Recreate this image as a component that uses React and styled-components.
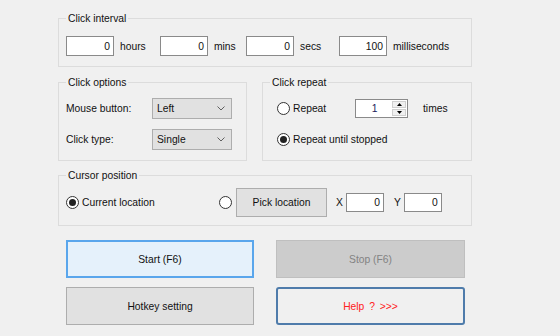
import React from 'react';
import styled, { createGlobalStyle, css } from 'styled-components';

const GlobalStyle = createGlobalStyle`
  html, body {
    margin: 0;
    padding: 0;
    background: #f0f0f0;
  }
  body {
    font-family: 'Liberation Sans', Arial, sans-serif;
    font-size: 10.3px;
    color: #111;
  }
`;

const Window = styled.div`
  width: 560px;
  height: 336px;
  background: #f0f0f0;
  padding: 12px 0 0 58px;
  box-sizing: border-box;
  overflow: hidden;
`;

const Group = styled.fieldset`
  margin: 0;
  padding: 0;
  border: 1px solid #dcdcdc;
  width: ${(p) => p.width}px;
  box-sizing: border-box;
  margin-top: ${(p) => p.top || 0}px;
`;

const Legend = styled.legend`
  margin-left: 7px;
  padding: 0 2px;
  line-height: 13px;
`;

const Body = styled.div`
  padding: ${(p) => p.pad};
  display: flex;
  flex-direction: column;
  gap: ${(p) => p.gap || 0}px;
`;

const Row = styled.div`
  display: flex;
  align-items: center;
  height: ${(p) => p.h || 21}px;
`;

const TextBox = styled.div`
  width: ${(p) => p.w || 48}px;
  height: ${(p) => p.h || 20}px;
  box-sizing: border-box;
  background: #fff;
  border: 1px solid #8a8a8a;
  display: flex;
  align-items: center;
  justify-content: flex-end;
  padding-right: 3px;
  flex: none;
`;

const Unit = styled.span`
  margin-left: ${(p) => p.gap || 6}px;
  width: ${(p) => (p.w ? `${p.w}px` : 'auto')};
  flex: none;
`;

const Pair = styled.div`
  display: grid;
  grid-template-columns: 86px 80px;
  align-items: center;
  height: 21px;
`;

const Combo = styled.div`
  height: 21px;
  box-sizing: border-box;
  background: #e1e1e1;
  border: 1px solid #adadad;
  display: flex;
  align-items: center;
  justify-content: space-between;
  padding: 0 6px 0 4px;
`;

const Chevron = () => (
  <svg width="8" height="5" viewBox="0 0 8 5">
    <path d="M0.5 0.5 L4 4 L7.5 0.5" fill="none" stroke="#606060" strokeWidth="1" />
  </svg>
);

const RadioWrap = styled.label`
  display: flex;
  align-items: center;
  gap: 3px;
  width: ${(p) => (p.w ? `${p.w}px` : 'auto')};
  flex: none;
`;

const Circle = styled.span`
  width: 13px;
  height: 13px;
  box-sizing: border-box;
  border-radius: 50%;
  border: 1px solid #333;
  background: #fff;
  display: flex;
  align-items: center;
  justify-content: center;
  flex: none;
  ${(p) =>
    p.checked &&
    css`
      &::after {
        content: '';
        width: 7px;
        height: 7px;
        border-radius: 50%;
        background: #222;
      }
    `};
`;

const Radio = ({ checked, children, w }) => (
  <RadioWrap w={w}>
    <Circle checked={checked} />
    {children}
  </RadioWrap>
);

const Spinner = styled.div`
  width: 53px;
  height: 19px;
  box-sizing: border-box;
  background: #fff;
  border: 1px solid #8a8a8a;
  display: flex;
  flex: none;
`;

const SpinValue = styled.div`
  flex: 1;
  display: flex;
  align-items: center;
  justify-content: center;
  padding-left: 2px;
  color: #1c1c5c;
`;

const SpinButtons = styled.div`
  width: 16px;
  display: flex;
  flex-direction: column;
  gap: 1px;
  padding: 1px;
  box-sizing: border-box;
`;

const SpinBtn = styled.div`
  flex: 1;
  background: #f0f0f0;
  border: 1px solid #cfcfcf;
  display: flex;
  align-items: center;
  justify-content: center;
`;

const Arrow = ({ up }) => (
  <svg width="5" height="3" viewBox="0 0 5 3">
    <path d={up ? 'M0 3 L2.5 0 L5 3 Z' : 'M0 0 L2.5 3 L5 0 Z'} fill="#000" />
  </svg>
);

const Columns = styled.div`
  display: flex;
  gap: 15px;
  margin-top: 9px;
`;

const FormButton = styled.div`
  box-sizing: border-box;
  width: ${(p) => p.w}px;
  height: ${(p) => p.h}px;
  display: flex;
  align-items: center;
  justify-content: center;
  background: #e1e1e1;
  border: 1px solid #adadad;
  color: #111;
  flex: none;
  ${(p) =>
    p.variant === 'focus' &&
    css`
      background: #e5f1fb;
      border: 2px solid #5aa6ec;
    `};
  ${(p) =>
    p.variant === 'disabled' &&
    css`
      background: #cccccc;
      border: 1px solid #bfbfbf;
      color: #838383;
    `};
  ${(p) =>
    p.variant === 'link' &&
    css`
      background: #f0f0f0;
      border: 2px solid #4f7cab;
      border-radius: 3px;
      color: #ff2020;
      word-spacing: 2px;
    `};
`;

const ActionGrid = styled.div`
  display: grid;
  grid-template-columns: 188px 189px;
  grid-auto-rows: 38px;
  column-gap: 22px;
  row-gap: 9px;
  margin: 14px 0 0 8px;
`;

const Spacer = styled.span`
  width: ${(p) => p.w}px;
  flex: none;
`;

export default function App() {
  return (
    <>
      <GlobalStyle />
      <Window>
        <Group width={414}>
          <Legend>Click interval</Legend>
          <Body pad="11px 7px 10px">
            <Row h={20}>
              <TextBox>0</TextBox>
              <Unit w={40}>hours</Unit>
              <TextBox>0</TextBox>
              <Unit w={32}>mins</Unit>
              <TextBox>0</TextBox>
              <Unit w={39}>secs</Unit>
              <TextBox>100</TextBox>
              <Unit>milliseconds</Unit>
            </Row>
          </Body>
        </Group>

        <Columns>
          <Group width={189}>
            <Legend>Click options</Legend>
            <Body pad="9px 7px 10px" gap={10}>
              <Pair>
                <span>Mouse button:</span>
                <Combo>
                  Left
                  <Chevron />
                </Combo>
              </Pair>
              <Pair>
                <span>Click type:</span>
                <Combo>
                  Single
                  <Chevron />
                </Combo>
              </Pair>
            </Body>
          </Group>

          <Group width={210}>
            <Legend>Click repeat</Legend>
            <Body pad="9px 14px 10px" gap={10}>
              <Row>
                <Radio w={78}>Repeat</Radio>
                <Spinner>
                  <SpinValue>1</SpinValue>
                  <SpinButtons>
                    <SpinBtn>
                      <Arrow up />
                    </SpinBtn>
                    <SpinBtn>
                      <Arrow />
                    </SpinBtn>
                  </SpinButtons>
                </Spinner>
                <Unit gap={15}>times</Unit>
              </Row>
              <Row>
                <Radio checked>Repeat until stopped</Radio>
              </Row>
            </Body>
          </Group>
        </Columns>

        <Group width={414} top={8}>
          <Legend>Cursor position</Legend>
          <Body pad="6px 7px 8px">
            <Row h={29}>
              <Radio checked w={153}>Current location</Radio>
              <Circle />
              <Spacer w={4} />
              <FormButton w={91} h={29}>Pick location</FormButton>
              <Spacer w={9} />
              <span>X</span>
              <Spacer w={3} />
              <TextBox w={38} h={19}>0</TextBox>
              <Spacer w={10} />
              <span>Y</span>
              <Spacer w={3} />
              <TextBox w={38} h={19}>0</TextBox>
            </Row>
          </Body>
        </Group>

        <ActionGrid>
          <FormButton variant="focus">Start (F6)</FormButton>
          <FormButton variant="disabled">Stop (F6)</FormButton>
          <FormButton>Hotkey setting</FormButton>
          <FormButton variant="link">Help ? &gt;&gt;&gt;</FormButton>
        </ActionGrid>
      </Window>
    </>
  );
}
